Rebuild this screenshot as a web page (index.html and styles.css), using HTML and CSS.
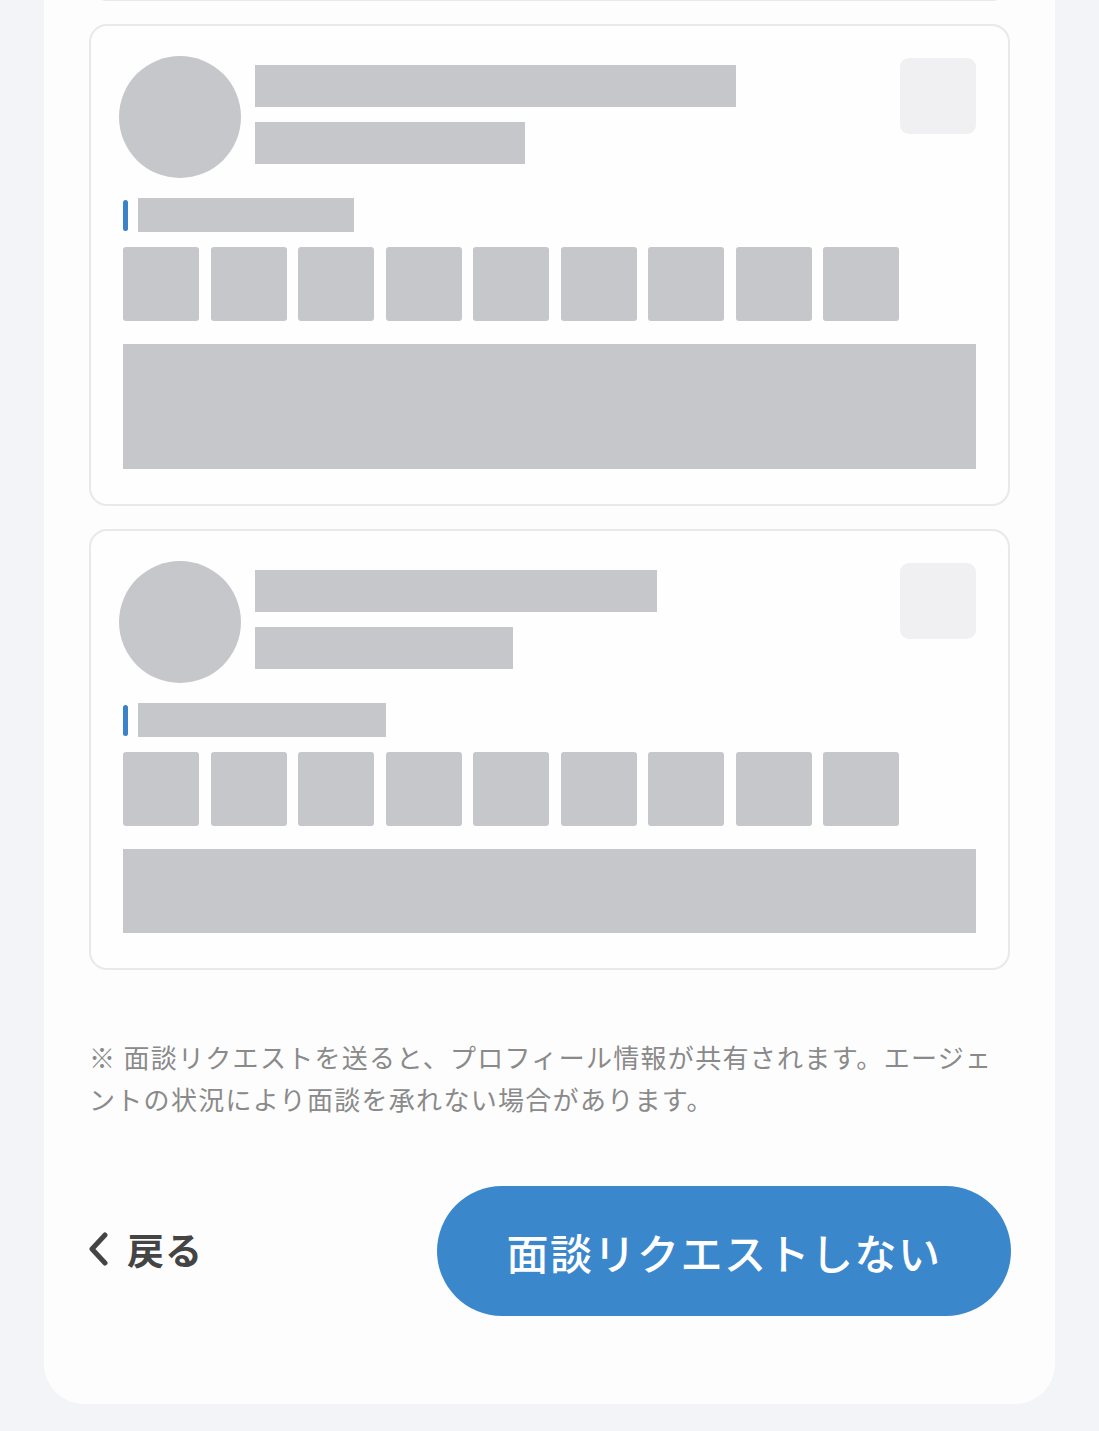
FILE: index.html
```html
<!DOCTYPE html>
<html lang="ja">
<head>
    <meta charset="UTF-8">
    <meta name="viewport" content="width=device-width, initial-scale=1.0">
    <title>面談リクエスト</title>
    <link rel="stylesheet" href="styles.css">
</head>
<body>
    <div class="panel">
        <div class="card-list">
            <!-- previous card, scrolled mostly out of view -->
            <div class="card card-prev"></div>

            <div class="card">
                <div class="card-head">
                    <div class="avatar"></div>
                    <div class="lines">
                        <div class="bar bar-name" style="width: 481px"></div>
                        <div class="bar bar-sub" style="width: 270px"></div>
                    </div>
                    <div class="check"></div>
                </div>
                <div class="label-row">
                    <span class="accent"></span>
                    <div class="bar bar-label" style="width: 216px"></div>
                </div>
                <div class="tiles">
                    <div class="tile"></div><div class="tile"></div><div class="tile"></div>
                    <div class="tile"></div><div class="tile"></div><div class="tile"></div>
                    <div class="tile"></div><div class="tile"></div><div class="tile"></div>
                </div>
                <div class="block" style="height: 125px"></div>
            </div>

            <div class="card">
                <div class="card-head">
                    <div class="avatar"></div>
                    <div class="lines">
                        <div class="bar bar-name" style="width: 402px"></div>
                        <div class="bar bar-sub" style="width: 258px"></div>
                    </div>
                    <div class="check"></div>
                </div>
                <div class="label-row">
                    <span class="accent"></span>
                    <div class="bar bar-label" style="width: 248px"></div>
                </div>
                <div class="tiles">
                    <div class="tile"></div><div class="tile"></div><div class="tile"></div>
                    <div class="tile"></div><div class="tile"></div><div class="tile"></div>
                    <div class="tile"></div><div class="tile"></div><div class="tile"></div>
                </div>
                <div class="block" style="height: 84px"></div>
            </div>
        </div>

        <p class="note">※ 面談リクエストを送ると、プロフィール情報が共有されます。エージェントの状況により面談を承れない場合があります。</p>

        <div class="actions">
            <a class="back" href="#">
                <svg class="back-icon" viewBox="0 0 22 34" width="22" height="34">
                    <path d="M18 3 L5 17 L18 31" fill="none" stroke="#444" stroke-width="5" stroke-linecap="round" stroke-linejoin="round"/>
                </svg>
                <span>戻る</span>
            </a>
            <button class="primary">面談リクエストしない</button>
        </div>
    </div>
</body>
</html>
```

FILE: styles.css
```css
body {
    margin: 0;
    padding: 0;
    background: #f3f4f7;
    font-family: "Noto Sans CJK JP", "Noto Sans", sans-serif;
    overflow: hidden;
}
a {
    text-decoration: none;
}
.panel {
    margin: -119px 44px 0 44px;
    padding: 0 45px 88px 45px;
    background: #fdfdfd;
    border-radius: 0 0 40px 40px;
}
.card-list {
    display: flex;
    flex-direction: column;
    gap: 23px;
}
.card {
    box-sizing: border-box;
    border: 2px solid #e9e9eb;
    border-radius: 18px;
    background: #fefefe;
    padding: 30px 32px 35px 32px;
}
.card-prev {
    height: 120px;
}
.card-head {
    display: flex;
    align-items: flex-start;
}
.avatar {
    width: 122px;
    height: 122px;
    border-radius: 50%;
    background: #c6c7cb;
    margin-left: -4px;
    flex-shrink: 0;
}
.lines {
    display: flex;
    flex-direction: column;
    gap: 15px;
    margin-left: 14px;
    padding-top: 9px;
}
.bar {
    background: #c6c7cb;
    height: 42px;
}
.check {
    margin-left: auto;
    margin-top: 2px;
    width: 76px;
    height: 76px;
    border-radius: 9px;
    background: #f0f0f2;
}
.label-row {
    display: flex;
    align-items: center;
    gap: 10px;
    margin-top: 20px;
}
.accent {
    width: 5px;
    height: 31px;
    border-radius: 3px;
    background: #3b82c8;
}
.bar-label {
    height: 34px;
}
.tiles {
    display: flex;
    gap: 11.5px;
    margin-top: 15px;
}
.tile {
    width: 76px;
    height: 74px;
    border-radius: 3px;
    background: #c6c7cb;
}
.block {
    margin-top: 23px;
    background: #c6c7cb;
}
.note {
    margin: 66px 0 0 0;
    font-size: 26px;
    font-weight: 400;
    line-height: 42px;
    letter-spacing: 1.3px;
    color: #8a8a8a;
}
.actions {
    display: flex;
    align-items: center;
    justify-content: space-between;
    margin-top: 66px;
}
.back {
    display: flex;
    align-items: center;
    gap: 18px;
    color: #444;
    font-size: 37px;
    font-weight: bold;
    letter-spacing: 1px;
    margin-left: -2px;
    margin-top: -4px;
}
.primary {
    width: 574px;
    height: 130px;
    margin-right: -1px;
    border: none;
    border-radius: 65px;
    background: #3b87cc;
    color: white;
    font-family: "Noto Sans CJK JP", sans-serif;
    font-size: 42px;
    font-weight: 500;
    letter-spacing: 1.5px;
    cursor: pointer;
}
```
